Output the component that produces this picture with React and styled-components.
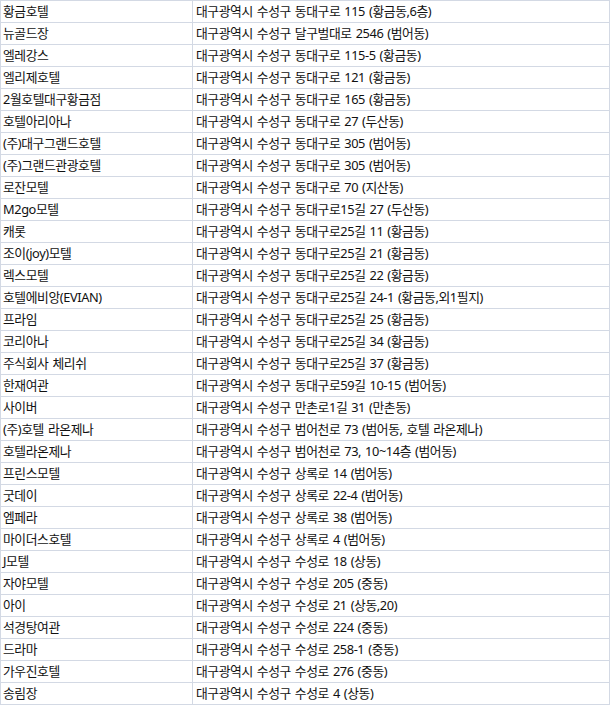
import { Fragment } from 'react';
import styled, { createGlobalStyle } from 'styled-components';

const GlobalStyle = createGlobalStyle`
  html, body {
    margin: 0;
    padding: 0;
    background: #ffffff;
  }
  body {
    font-family: "Noto Sans", "Noto Sans CJK KR", sans-serif;
    color: #111111;
  }
`;

const rows = [
  ['황금호텔', '대구광역시 수성구 동대구로 115 (황금동,6층)'],
  ['뉴골드장', '대구광역시 수성구 달구벌대로 2546 (범어동)'],
  ['엘레강스', '대구광역시 수성구 동대구로 115-5 (황금동)'],
  ['엘리제호텔', '대구광역시 수성구 동대구로 121 (황금동)'],
  ['2월호텔대구황금점', '대구광역시 수성구 동대구로 165 (황금동)'],
  ['호텔아리아나', '대구광역시 수성구 동대구로 27 (두산동)'],
  ['(주)대구그랜드호텔', '대구광역시 수성구 동대구로 305 (범어동)'],
  ['(주)그랜드관광호텔', '대구광역시 수성구 동대구로 305 (범어동)'],
  ['로잔모텔', '대구광역시 수성구 동대구로 70 (지산동)'],
  ['M2go모텔', '대구광역시 수성구 동대구로15길 27 (두산동)'],
  ['캐롯', '대구광역시 수성구 동대구로25길 11 (황금동)'],
  ['조이(joy)모텔', '대구광역시 수성구 동대구로25길 21 (황금동)'],
  ['렉스모텔', '대구광역시 수성구 동대구로25길 22 (황금동)'],
  ['호텔에비앙(EVIAN)', '대구광역시 수성구 동대구로25길 24-1 (황금동,외1필지)'],
  ['프라임', '대구광역시 수성구 동대구로25길 25 (황금동)'],
  ['코리아나', '대구광역시 수성구 동대구로25길 34 (황금동)'],
  ['주식회사 체리쉬', '대구광역시 수성구 동대구로25길 37 (황금동)'],
  ['한재여관', '대구광역시 수성구 동대구로59길 10-15 (범어동)'],
  ['사이버', '대구광역시 수성구 만촌로1길 31 (만촌동)'],
  ['(주)호텔 라온제나', '대구광역시 수성구 범어천로 73 (범어동, 호텔 라온제나)'],
  ['호텔라온제나', '대구광역시 수성구 범어천로 73, 10~14층 (범어동)'],
  ['프린스모텔', '대구광역시 수성구 상록로 14 (범어동)'],
  ['굿데이', '대구광역시 수성구 상록로 22-4 (범어동)'],
  ['엠페라', '대구광역시 수성구 상록로 38 (범어동)'],
  ['마이더스호텔', '대구광역시 수성구 상록로 4 (범어동)'],
  ['J모텔', '대구광역시 수성구 수성로 18 (상동)'],
  ['자야모텔', '대구광역시 수성구 수성로 205 (중동)'],
  ['아이', '대구광역시 수성구 수성로 21 (상동,20)'],
  ['석경탕여관', '대구광역시 수성구 수성로 224 (중동)'],
  ['드라마', '대구광역시 수성구 수성로 258-1 (중동)'],
  ['가우진호텔', '대구광역시 수성구 수성로 276 (중동)'],
  ['송림장', '대구광역시 수성구 수성로 4 (상동)'],
];

const Sheet = styled.div`
  display: grid;
  grid-template-columns: 192px 417px;
  grid-auto-rows: 22px;
  width: 610px;
  border-top: 1px solid #d3d9e4;
  border-left: 1px solid #d3d9e4;
  box-sizing: border-box;
`;

const Cell = styled.div`
  box-sizing: border-box;
  border-right: 1px solid #d3d9e4;
  border-bottom: 1px solid #d3d9e4;
  padding-left: ${(p) => (p.$address ? '3px' : '2px')};
  font-size: 12.8px;
  letter-spacing: -0.4px;
  word-spacing: 1px;
  line-height: 21px;
  white-space: nowrap;
  overflow: hidden;
  color: #111111;
`;

const App = () => {
  return (
    <>
      <GlobalStyle />
      <Sheet>
        {rows.map(([name, address]) => (
          <Fragment key={name}>
            <Cell>{name}</Cell>
            <Cell $address>{address}</Cell>
          </Fragment>
        ))}
      </Sheet>
    </>
  );
};

export default App;
